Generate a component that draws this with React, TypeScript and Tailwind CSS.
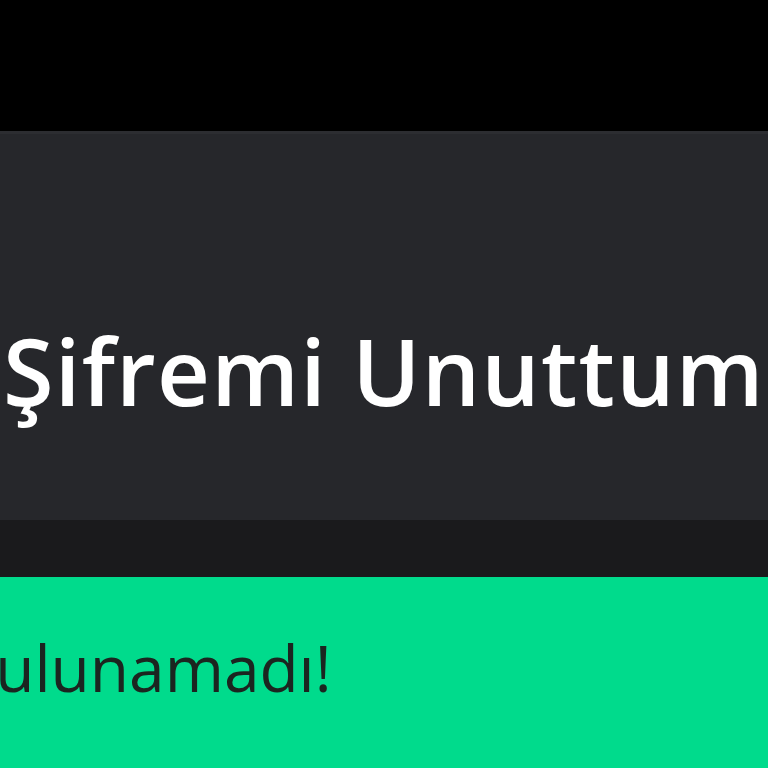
import React from 'react';

export default function App() {
  return (
    <div className="flex h-[768px] w-[768px] flex-col overflow-hidden bg-black" style={{ fontFamily: '"Open Sans", "Noto Sans", sans-serif' }}>
      <div className="h-[131px] shrink-0 bg-black" />
      <div className="h-[389px] shrink-0 border-t-[3px] border-[#2c2d31] bg-[#26272b] pl-[3px] pt-[191px]">
        <h1 className="whitespace-nowrap text-[92px] font-semibold leading-none tracking-[1.2px] text-white">Şifremi Unuttum</h1>
      </div>
      <div className="h-[57px] shrink-0 bg-[#1a1a1c]" />
      <div className="flex-1 bg-[#00db8c] pt-[59px]">
        <p className="-ml-[44px] whitespace-nowrap text-[64px] leading-none text-[#1b2520]">bulunamadı!</p>
      </div>
    </div>
  );
}
